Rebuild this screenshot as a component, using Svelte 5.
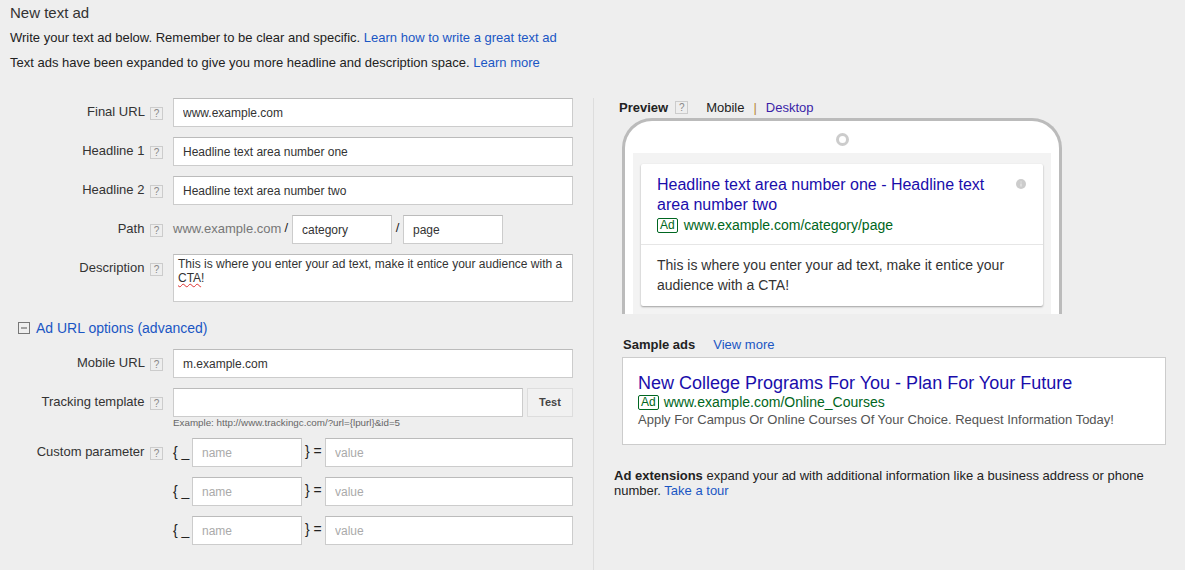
<script>
  const params = [0, 1, 2];
</script>

<div class="page">
  <header class="intro">
    <h1>New text ad</h1>
    <p class="l1">Write your text ad below. Remember to be clear and specific. <a href="#a">Learn how to write a great text ad</a></p>
    <p class="l2">Text ads have been expanded to give you more headline and description space. <a href="#a">Learn more</a></p>
  </header>

  <div class="columns">
    <section class="form">
      <div class="row">
        <div class="label">Final URL <span class="q">?</span></div>
        <input class="inp grow" value="www.example.com" />
      </div>
      <div class="row">
        <div class="label">Headline 1 <span class="q">?</span></div>
        <input class="inp grow" value="Headline text area number one" />
      </div>
      <div class="row">
        <div class="label">Headline 2 <span class="q">?</span></div>
        <input class="inp grow" value="Headline text area number two" />
      </div>
      <div class="row">
        <div class="label">Path <span class="q">?</span></div>
        <span class="domain">www.example.com</span><span class="sep">/</span>
        <input class="inp path1" value="category" />
        <span class="sep2">/</span>
        <input class="inp path2" value="page" />
      </div>
      <div class="row desc">
        <div class="label">Description <span class="q">?</span></div>
        <div class="ta">This is where you enter your ad text, make it entice your audience with a <span class="spell">CTA</span>!</div>
      </div>

      <div class="adv">
        <svg width="12" height="12" viewBox="0 0 12 12"><rect x=".5" y=".5" width="11" height="11" fill="none" stroke="#777"/><path d="M3 6h6" stroke="#555"/></svg>
        <a href="#a">Ad URL options (advanced)</a>
      </div>

      <div class="row">
        <div class="label">Mobile URL <span class="q">?</span></div>
        <input class="inp grow" value="m.example.com" />
      </div>
      <div class="row track">
        <div class="label">Tracking template <span class="q">?</span></div>
        <input class="inp grow" value="" />
        <button class="test">Test</button>
      </div>
      <div class="example">Example: http://www.trackingc.com/?url={'{'}lpurl{'}'}&amp;id=5</div>
      {#each params as p}
        <div class="row param">
          <div class="label">
            {#if p === 0}Custom parameter <span class="q">?</span>{/if}
          </div>
          <span class="brace">{'{'} _</span>
          <input class="inp name" placeholder="name" />
          <span class="brace2">{'}'} =</span>
          <input class="inp grow" placeholder="value" />
        </div>
      {/each}
    </section>

    <aside class="side">
      <div class="tabs">
        <b>Preview</b><span class="q tabq">?</span>
        <span class="mobile">Mobile</span><span class="bar">|</span><a class="desk" href="#a">Desktop</a>
      </div>

      <div class="phone">
        <div class="camera"></div>
        <div class="screen">
          <div class="card">
            <div class="card-top">
              <div class="ad-title">Headline text area number one - Headline text area number two</div>
              <div class="ad-url"><span class="badge">Ad</span>www.example.com/category/page</div>
              <svg class="info" width="10" height="10" viewBox="0 0 10 10"><circle cx="5" cy="5" r="5" fill="#ccc"/><path d="M5 2.5v1M5 4.5v3" stroke="#eee"/></svg>
            </div>
            <div class="card-body">This is where you enter your ad text, make it entice your audience with a CTA!</div>
          </div>
        </div>
      </div>

      <div class="sample-head"><b>Sample ads</b><a href="#a">View more</a></div>
      <div class="sample">
        <div class="s-title">New College Programs For You - Plan For Your Future</div>
        <div class="s-url"><span class="badge">Ad</span>www.example.com/Online_Courses</div>
        <div class="s-desc">Apply For Campus Or Online Courses Of Your Choice. Request Information Today!</div>
      </div>

      <p class="ext"><b>Ad extensions</b> expand your ad with additional information like a business address or phone number. <a href="#a">Take a tour</a></p>
    </aside>
  </div>
</div>

<style>
  :global(body) {
    margin: 0;
    background: #eee;
    font-family: "Liberation Sans", Arial, sans-serif;
    color: #222;
  }
  .page {
    width: 1185px;
    height: 570px;
    overflow: hidden;
    background: #eee;
    font-size: 13px;
  }
  a {
    color: #1a56c4;
    text-decoration: none;
  }
  .intro {
    height: 98px;
    padding-left: 10px;
    box-sizing: border-box;
  }
  h1 {
    margin: 0;
    padding-top: 5px;
    font-size: 15px;
    font-weight: 400;
    line-height: 16px;
    color: #333;
  }
  .l1, .l2 {
    margin: 0;
    font-size: 13px;
    line-height: 16px;
  }
  .l1 { padding-top: 9px; }
  .l2 { padding-top: 9px; }

  .columns {
    display: flex;
    height: 472px;
  }
  .form {
    width: 573px;
    padding-right: 20px;
    border-right: 1px solid #ddd;
    flex: none;
  }
  .row {
    display: flex;
    align-items: flex-start;
    height: 29px;
    margin-bottom: 10px;
  }
  .label {
    width: 163px;
    flex: none;
    text-align: right;
    font-size: 13px;
    line-height: 16px;
    padding-top: 6px;
    margin-right: 10px;
    color: #333;
    white-space: nowrap;
    box-sizing: border-box;
  }
  .q {
    display: inline-block;
    width: 11px;
    height: 11px;
    margin-left: 2px;
    border: 1px solid #ccc;
    background: #eee;
    color: #888;
    font-size: 10px;
    font-weight: 400;
    line-height: 11px;
    text-align: center;
    box-sizing: content-box;
    vertical-align: -1px;
  }
  .tabq { margin-left: 7px; }
  .inp {
    height: 29px;
    box-sizing: border-box;
    border: 1px solid #ccc;
    border-top-color: #bbb;
    background: #fff;
    padding: 1px 9px 0;
    font: 12px "Liberation Sans", Arial, sans-serif;
    color: #333;
    outline: none;
    min-width: 0;
    border-radius: 0;
  }
  .inp::placeholder { color: #aaa; opacity: 1; }
  .grow { flex: 1; }
  .domain {
    font-size: 13px;
    line-height: 16px;
    padding-top: 6px;
    color: #777;
  }
  .sep {
    font-size: 13px;
    line-height: 16px;
    padding-top: 5px;
    margin: 0 4px 0 3px;
  }
  .sep2 {
    font-size: 13px;
    line-height: 16px;
    padding-top: 5px;
    width: 11px;
    text-align: center;
  }
  .path1 { width: 100px; }
  .path2 { width: 100px; }
  .desc { height: 48px; margin-bottom: 0; }
  .ta {
    flex: 1;
    height: 48px;
    box-sizing: border-box;
    border: 1px solid #ccc;
    border-top-color: #bbb;
    background: #fff;
    padding: 2px 4px;
    font-size: 12px;
    line-height: 14px;
    color: #333;
  }
  .spell {
    text-decoration: underline wavy #d33;
    text-decoration-thickness: 1px;
    text-underline-offset: 1px;
  }
  .adv {
    display: flex;
    align-items: center;
    gap: 6px;
    height: 47px;
    padding: 4px 0 0 18px;
    box-sizing: border-box;
    font-size: 14px;
  }
  .track { margin-bottom: 0; }
  .test {
    width: 46px;
    height: 29px;
    margin-left: 4px;
    box-sizing: border-box;
    border: 1px solid #ddd;
    background: #f1f1f1;
    font: bold 11px "Liberation Sans", Arial, sans-serif;
    color: #444;
    padding: 0 0 2px;
  }
  .example {
    height: 21px;
    padding: 0 0 0 173px;
    font-size: 9.8px;
    line-height: 12px;
    color: #666;
    box-sizing: border-box;
  }
  .brace {
    width: 19px;
    flex: none;
    font-size: 14px;
    line-height: 16px;
    padding-top: 6px;
    white-space: nowrap;
  }
  .brace2 {
    width: 23px;
    flex: none;
    padding-left: 3px;
    box-sizing: border-box;
    font-size: 14px;
    line-height: 16px;
    padding-top: 5px;
    white-space: nowrap;
  }
  .name { width: 110px; flex: none; }

  .side {
    flex: 1;
    padding-left: 28px;
    min-width: 0;
    position: relative;
  }
  .tabs {
    display: flex;
    align-items: center;
    height: 18px;
    margin-bottom: 2px;
    margin-left: -3px;
    font-size: 13px;
  }
  .tabs b { color: #222; }
  .mobile { margin-left: 18px; color: #222; }
  .bar { margin: 0 9px; color: #b8893c; }
  .desk { color: #3a1fa8; }
  .phone {
    width: 440px;
    height: 196px;
    box-sizing: border-box;
    border: 3px solid #bbb;
    border-bottom: 0;
    border-radius: 30px 30px 0 0;
    background: #fff;
    padding: 32px 8px 0;
  }
  .camera {
    position: absolute;
    left: 242px;
    top: 35px;
    width: 13px;
    height: 13px;
    box-sizing: border-box;
    border: 3px solid #ccc;
    border-radius: 50%;
  }
  .screen {
    height: 161px;
    background: #f3f3f3;
    padding: 11px 8px 0;
    box-sizing: border-box;
  }
  .card {
    background: #fff;
    height: 142px;
    border-radius: 2px;
    box-shadow: 0 1px 2px rgba(0, 0, 0, .35);
  }
  .card-top {
    position: relative;
    height: 81px;
    padding: 11px 16px 0;
    box-sizing: border-box;
    border-bottom: 1px solid #e6e6e6;
  }
  .ad-title {
    width: 345px;
    font-size: 16px;
    line-height: 20px;
    color: #1a0dab;
  }
  .ad-url {
    display: flex;
    align-items: center;
    font-size: 14px;
    line-height: 20px;
    color: #006621;
    white-space: nowrap;
  }
  .ad-url .badge { margin-right: 6px; }
  .badge {
    display: inline-block;
    border: 1px solid #006621;
    border-radius: 2px;
    font-size: 12px;
    line-height: 13px;
    padding: 0 2px;
    margin-right: 5px;
    color: #006621;
  }
  .info {
    position: absolute;
    top: 15px;
    right: 17px;
  }
  .card-body {
    padding: 10px 16px;
    font-size: 14px;
    line-height: 20px;
    color: #333;
  }
  .sample-head {
    display: flex;
    padding: 23px 0 0 1px;
    height: 43px;
    box-sizing: border-box;
    font-size: 13px;
    line-height: 16px;
  }
  .sample-head a { margin-left: 18px; }
  .sample {
    width: 544px;
    height: 88px;
    box-sizing: border-box;
    background: #fff;
    border: 1px solid #ccc;
    padding: 15px 15px 0;
  }
  .s-title {
    font-size: 18px;
    line-height: 21px;
    color: #1a0dab;
    white-space: nowrap;
  }
  .s-url {
    display: flex;
    align-items: center;
    font-size: 14px;
    line-height: 17px;
    color: #006621;
    white-space: nowrap;
    margin-top: 0;
  }
  .s-desc {
    font-size: 13px;
    line-height: 15px;
    color: #545454;
    white-space: nowrap;
    margin-top: 1px;
  }
  .ext {
    width: 540px;
    margin: 23px 0 0 -8px;
    font-size: 13px;
    line-height: 15px;
    color: #222;
  }
</style>
